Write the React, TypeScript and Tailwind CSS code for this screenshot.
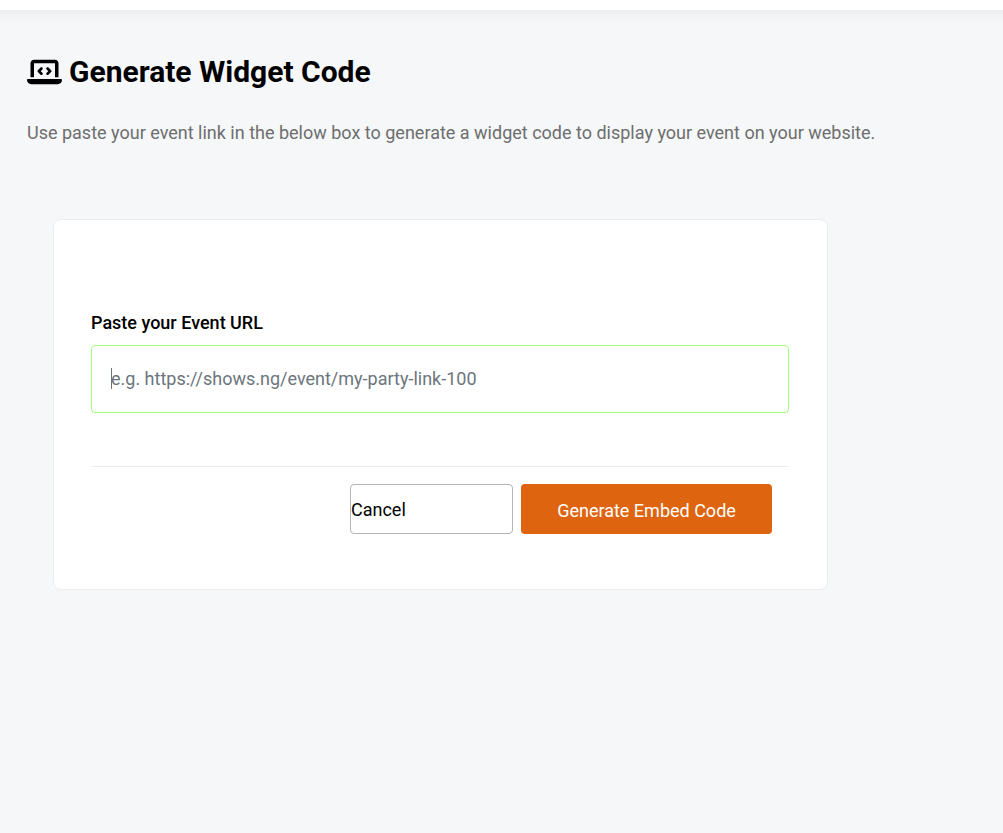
import { useState } from "react";
import { FaLaptopCode } from "react-icons/fa6";

function WidgetForm() {
  const [url, setUrl] = useState("");

  return (
    <form
      onSubmit={(e) => e.preventDefault()}
      className="w-full max-w-[775px] rounded-lg border border-[#ebedef] bg-white pt-[89px] pr-[38px] pb-[55px] pl-[37px]"
    >
      <label htmlFor="event-url" className="block text-lg leading-[27px] font-medium text-black">
        Paste your Event URL
      </label>
      <div className="relative mt-[9px] flex">
        <input
          id="event-url"
          type="text"
          value={url}
          onChange={(e) => setUrl(e.target.value)}
          placeholder="e.g. https://shows.ng/event/my-party-link-100"
          className="h-[68px] w-full rounded border border-[#a0ff78] bg-white px-[19px] pb-[2px] text-lg text-black outline-none placeholder:text-[#6c757d]"
        />
        {url === "" && (
          <span className="absolute top-[23px] left-5 h-[21px] w-px bg-[#6c757d]" />
        )}
      </div>
      <hr className="mt-[53px] border-[#ebedef]" />
      <div className="mt-[17px] flex justify-end gap-2 pr-[17px]">
        <button
          type="button"
          onClick={() => setUrl("")}
          className="h-[50px] w-[163px] rounded border border-[#b4b4b4] bg-white pt-[2px] text-left text-lg text-black"
        >
          Cancel
        </button>
        <button
          type="submit"
          className="h-[50px] w-[251px] rounded bg-[#de640f] pt-1 text-lg text-white"
        >
          Generate Embed Code
        </button>
      </div>
    </form>
  );
}

export default function App() {
  return (
    <div className="flex min-h-screen flex-col bg-[#f5f7f9] font-['Roboto',sans-serif]">
      <header className="h-[10px] bg-white" />
      <div className="h-3 bg-linear-to-b from-[#edeef0] to-[#f5f7f9]" />
      <main className="px-[27px] pt-[30px]">
        <h1 className="flex items-center gap-[7px] text-[30px] leading-10 font-bold text-black">
          <FaLaptopCode className="h-7 w-[35px]" />
          Generate Widget Code
        </h1>
        <p className="mt-[27px] text-lg leading-[27px] text-[#6e6e6e]">
          Use paste your event link in the below box to generate a widget code to
          display your event on your website.
        </p>
        <section className="mt-[73px] px-[26px] pb-10">
          <WidgetForm />
        </section>
      </main>
    </div>
  );
}
